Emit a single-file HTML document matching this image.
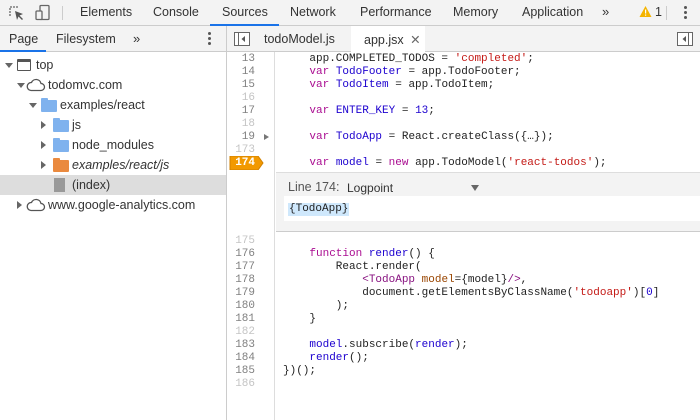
<!DOCTYPE html>
<html><head><style>
*{box-sizing:border-box;margin:0;padding:0}
body{width:700px;height:420px;overflow:hidden;background:#fff;font-family:"Liberation Sans",sans-serif;font-size:12px;color:#333;position:relative}
.abs{position:absolute}
.bar{background:#f3f3f3;border-bottom:1px solid #ccc}
.t{position:absolute;top:5px;font-size:12.5px;color:#333;white-space:nowrap}
.mono{font-family:"Liberation Mono",monospace;font-size:11px}
.ln{position:absolute;left:226px;width:29px;text-align:right;color:#808080;height:13px;line-height:13px}
.ln.d{color:#c4c4c4}
.cl{position:absolute;left:283px;white-space:pre;height:13px;line-height:13px;color:#222}
.k{color:#aa0d91}.v{color:#1c00cf}.s{color:#c41a16}.n{color:#1c00cf}.tg{color:#881280}.at{color:#994500}
.row{position:absolute;left:0;width:226px;height:20px;line-height:20px;font-size:12.5px;white-space:nowrap}
.tri{position:absolute;width:0;height:0}
.fold{position:absolute;width:16px;height:12px;background:#7fb2ee;border-radius:1px}
.fold:before{content:"";position:absolute;left:0;top:-2px;width:7px;height:3px;background:inherit;border-radius:1px 1px 0 0}
</style></head><body>
<!-- top bar -->
<div class="abs bar" style="left:0;top:0;width:700px;height:26px"></div>
<svg class="abs" style="left:7px;top:4px" width="18" height="18" viewBox="0 0 18 18"><path d="M3 12V3h9" fill="none" stroke="#666" stroke-width="1.3" stroke-dasharray="2 1"/><path d="M8 7l2 9 1.5-3.5L15 16l1-1-3.5-3.5L16 10z" fill="#555"/></svg>
<svg class="abs" style="left:34px;top:4px" width="18" height="18" viewBox="0 0 18 18"><rect x="6" y="1.5" width="9" height="14" rx="1" fill="none" stroke="#666" stroke-width="1.3"/><rect x="2" y="7" width="6" height="8.5" rx="1" fill="#f3f3f3" stroke="#666" stroke-width="1.3"/></svg>
<div class="abs" style="left:62px;top:6px;width:1px;height:14px;background:#ccc"></div>
<div class="t" style="left:80px">Elements</div>
<div class="t" style="left:153px">Console</div>
<div class="t" style="left:222px;color:#333">Sources</div>
<div class="abs" style="left:210px;top:24px;width:69px;height:2px;background:#1a73e8"></div>
<div class="t" style="left:290px">Network</div>
<div class="t" style="left:360px">Performance</div>
<div class="t" style="left:453px">Memory</div>
<div class="t" style="left:522px">Application</div>
<div class="t" style="left:602px;font-size:13px;top:4px">»</div>
<svg class="abs" style="left:639px;top:5px" width="13" height="13" viewBox="0 0 13 13"><path d="M6.5 1L12.5 12H0.5z" fill="#f4b400"/><rect x="6" y="4.5" width="1.2" height="4" fill="#fff"/><rect x="6" y="9.5" width="1.2" height="1.2" fill="#fff"/></svg>
<div class="t" style="left:655px">1</div>
<div class="abs" style="left:666px;top:6px;width:1px;height:14px;background:#ccc"></div>
<div class="abs" style="left:684px;top:6px;width:3px;height:3px;border-radius:2px;background:#555;box-shadow:0 5px 0 #555,0 10px 0 #555"></div>

<!-- left panel -->
<div class="abs bar" style="left:0;top:26px;width:226px;height:26px"></div>
<div class="t" style="left:9px;top:32px">Page</div>
<div class="abs" style="left:0;top:50px;width:46px;height:2px;background:#1a73e8"></div>
<div class="t" style="left:56px;top:32px">Filesystem</div>
<div class="t" style="left:133px;top:31px;font-size:13px">»</div>
<div class="abs" style="left:208px;top:32px;width:3px;height:3px;border-radius:2px;background:#555;box-shadow:0 5px 0 #555,0 10px 0 #555"></div>
<div class="abs" style="left:226px;top:26px;width:1px;height:394px;background:#ccc"></div>

<div class="row" style="top:55px"><div class="tri" style="left:5px;top:8px;border-left:4px solid transparent;border-right:4px solid transparent;border-top:5px solid #666"></div>
<div class="abs" style="left:17px;top:4px;width:14px;height:12px;border:1.5px solid #555;border-top-width:3px;border-radius:1px"></div><span style="position:absolute;left:36px">top</span></div>
<div class="row" style="top:75px"><div class="tri" style="left:17px;top:8px;border-left:4px solid transparent;border-right:4px solid transparent;border-top:5px solid #666"></div>
<svg class="abs" style="left:26px;top:3px" width="20" height="14" viewBox="0 0 20 14"><path d="M5 12.5h10a3.5 3.5 0 0 0 0-7 5 5 0 0 0-9.5-1A4 4 0 0 0 5 12.5z" fill="none" stroke="#555" stroke-width="1.3"/></svg><span style="position:absolute;left:48px">todomvc.com</span></div>
<div class="row" style="top:95px"><div class="tri" style="left:29px;top:8px;border-left:4px solid transparent;border-right:4px solid transparent;border-top:5px solid #666"></div>
<div class="fold" style="left:41px;top:5px"></div><span style="position:absolute;left:60px">examples/react</span></div>
<div class="row" style="top:115px"><div class="tri" style="left:41px;top:6px;border-top:4px solid transparent;border-bottom:4px solid transparent;border-left:5px solid #666"></div>
<div class="fold" style="left:53px;top:5px"></div><span style="position:absolute;left:72px">js</span></div>
<div class="row" style="top:135px"><div class="tri" style="left:41px;top:6px;border-top:4px solid transparent;border-bottom:4px solid transparent;border-left:5px solid #666"></div>
<div class="fold" style="left:53px;top:5px"></div><span style="position:absolute;left:72px">node_modules</span></div>
<div class="row" style="top:155px"><div class="tri" style="left:41px;top:6px;border-top:4px solid transparent;border-bottom:4px solid transparent;border-left:5px solid #666"></div>
<div class="fold" style="left:53px;top:5px;background:#ea8a3f"></div><span style="position:absolute;left:72px;font-style:italic">examples/react/js</span></div>
<div class="row" style="top:175px;background:#ddd"><div class="abs" style="left:54px;top:3px;width:11px;height:14px;background:#999"></div><span style="position:absolute;left:72px">(index)</span></div>
<div class="row" style="top:195px"><div class="tri" style="left:17px;top:6px;border-top:4px solid transparent;border-bottom:4px solid transparent;border-left:5px solid #666"></div>
<svg class="abs" style="left:26px;top:3px" width="20" height="14" viewBox="0 0 20 14"><path d="M5 12.5h10a3.5 3.5 0 0 0 0-7 5 5 0 0 0-9.5-1A4 4 0 0 0 5 12.5z" fill="none" stroke="#555" stroke-width="1.3"/></svg><span style="position:absolute;left:48px">www.google-analytics.com</span></div>

<!-- editor tab bar -->
<div class="abs bar" style="left:227px;top:26px;width:473px;height:26px"></div>
<svg class="abs" style="left:234px;top:32px" width="16" height="14" viewBox="0 0 16 14"><rect x="0.5" y="0.5" width="15" height="13" fill="#fff" stroke="#666"/><rect x="4" y="1" width="1" height="12" fill="#666"/><path d="M11 4v6L7.5 7z" fill="#555"/></svg>
<div class="t" style="left:264px;top:32px">todoModel.js</div>
<div class="abs" style="left:351px;top:26px;width:74px;height:26px;background:#fff"></div>
<div class="t" style="left:364px;top:32px">app.jsx <span style="color:#666;margin-left:3px">✕</span></div>
<svg class="abs" style="left:677px;top:32px" width="16" height="14" viewBox="0 0 16 14"><rect x="0.5" y="0.5" width="15" height="13" fill="#fff" stroke="#666"/><rect x="11" y="1" width="1" height="12" fill="#666"/><path d="M9 4v6L5.5 7z" fill="#555"/></svg>

<!-- gutter -->
<div class="abs" style="left:227px;top:52px;width:48px;height:368px;background:#fff;border-right:1px solid #ddd"></div>

<div class="mono">
<div class="ln" style="top:53px">13</div><div class="cl" style="top:53px">    app.COMPLETED_TODOS = <span class="s">'completed'</span>;</div>
<div class="ln" style="top:66px">14</div><div class="cl" style="top:66px">    <span class="k">var</span> <span class="v">TodoFooter</span> = app.TodoFooter;</div>
<div class="ln" style="top:79px">15</div><div class="cl" style="top:79px">    <span class="k">var</span> <span class="v">TodoItem</span> = app.TodoItem;</div>
<div class="ln d" style="top:92px">16</div>
<div class="ln" style="top:105px">17</div><div class="cl" style="top:105px">    <span class="k">var</span> <span class="v">ENTER_KEY</span> = <span class="n">13</span>;</div>
<div class="ln d" style="top:118px">18</div>
<div class="ln" style="top:131px">19</div><div class="tri" style="left:264px;top:134px;border-top:3.5px solid transparent;border-bottom:3.5px solid transparent;border-left:5px solid #777"></div><div class="cl" style="top:131px">    <span class="k">var</span> <span class="v">TodoApp</span> = React.createClass({…});</div>
<div class="ln d" style="top:144px">173</div>
<svg class="abs" style="left:229px;top:156px" width="35" height="14" viewBox="0 0 35 14"><path d="M1 0h28l5 7-5 7H1z" fill="#f29900" stroke="#d08000"/></svg>
<div class="ln" style="top:157px;color:#fff;font-weight:bold">174</div><div class="cl" style="top:157px">    <span class="k">var</span> <span class="v">model</span> = <span class="k">new</span> app.TodoModel(<span class="s">'react-todos'</span>);</div>
</div>

<!-- logpoint panel -->
<div class="abs" style="left:276px;top:172px;width:424px;height:60px;background:#f3f3f3;border-top:1px solid #ddd;border-bottom:1px solid #ccc"></div>
<div class="abs" style="left:288px;top:180px;font-size:12.5px;color:#555">Line 174:</div>
<div class="abs" style="left:347px;top:181px;font-size:12px;color:#333">Logpoint</div>
<div class="tri" style="left:471px;top:185px;border-left:4px solid transparent;border-right:4px solid transparent;border-top:6px solid #666"></div>
<div class="abs" style="left:284px;top:196px;width:416px;height:25px;background:#fff"></div>
<div class="abs mono" style="left:288px;top:203px;background:#cfe8fc;color:#222;line-height:13px;padding:0 1px">{TodoApp}</div>

<div class="mono">
<div class="ln d" style="top:235px">175</div>
<div class="ln" style="top:248px">176</div><div class="cl" style="top:248px">    <span class="k">function</span> <span class="v">render</span>() {</div>
<div class="ln" style="top:261px">177</div><div class="cl" style="top:261px">        React.render(</div>
<div class="ln" style="top:274px">178</div><div class="cl" style="top:274px">            <span class="tg">&lt;TodoApp</span> <span class="at">model</span>={model}<span class="tg">/&gt;</span>,</div>
<div class="ln" style="top:287px">179</div><div class="cl" style="top:287px">            document.getElementsByClassName(<span class="s">'todoapp'</span>)[<span class="n">0</span>]</div>
<div class="ln" style="top:300px">180</div><div class="cl" style="top:300px">        );</div>
<div class="ln" style="top:313px">181</div><div class="cl" style="top:313px">    }</div>
<div class="ln d" style="top:326px">182</div>
<div class="ln" style="top:339px">183</div><div class="cl" style="top:339px">    <span class="v">model</span>.subscribe(<span class="v">render</span>);</div>
<div class="ln" style="top:352px">184</div><div class="cl" style="top:352px">    <span class="v">render</span>();</div>
<div class="ln" style="top:365px">185</div><div class="cl" style="top:365px">})();</div>
<div class="ln d" style="top:378px">186</div>
</div>
</body></html>
